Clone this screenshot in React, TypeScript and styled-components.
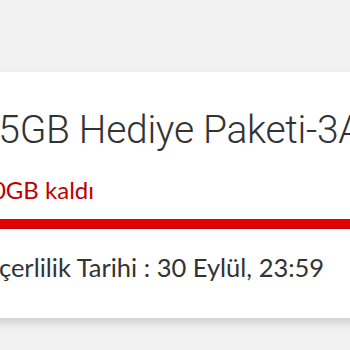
import React from "react";
import styled, { createGlobalStyle } from "styled-components";

const GlobalStyle = createGlobalStyle`
    html, body {
        margin: 0;
        padding: 0;
        background: #f2f2f2;
    }
`;

const Page = styled.div`
    width: 350px;
    height: 350px;
    overflow: hidden;
    background: #f2f2f2;
    padding-top: 72px;
    box-sizing: border-box;
    font-family: Lato, "Open Sans", sans-serif;
`;

const Card = styled.div`
    margin: 0 -30px 0 -22px;
    background: #fff;
    box-shadow: 0 5px 8px rgba(0, 0, 0, 0.14);
    height: 246px;
    display: flex;
    flex-direction: column;
`;

const Title = styled.h2`
    margin: 34px 0 0 -1px;
    font-family: Roboto, sans-serif;
    font-size: 39px;
    font-weight: 300;
    letter-spacing: -0.3px;
    line-height: 48px;
    color: #333;
    white-space: nowrap;
`;

const Remaining = styled.p`
    margin: 22px 0 0;
    font-size: 24px;
    line-height: 28px;
    color: #bd0000;
`;

const Track = styled.div`
    margin-top: 15px;
    height: 10px;
    background: #fbe3e3;
`;

const Fill = styled.div`
    height: 100%;
    background: #e60000;
    border-bottom: 1px solid #b30000;
    box-sizing: border-box;
`;

const Validity = styled.p`
    margin: 23px 0 0 -11px;
    font-size: 25.5px;
    line-height: 30px;
    color: #333;
    white-space: nowrap;
`;

export default function App() {
    const used = 100;
    return <Page>
        <GlobalStyle />
        <Card>
            <Title>15GB Hediye Paketi-3Ay</Title>
            <Remaining>10GB kaldı</Remaining>
            <Track>
                <Fill style={{ width: `${used}%` }} />
            </Track>
            <Validity>Geçerlilik Tarihi : 30 Eylül, 23:59</Validity>
        </Card>
    </Page>
}
